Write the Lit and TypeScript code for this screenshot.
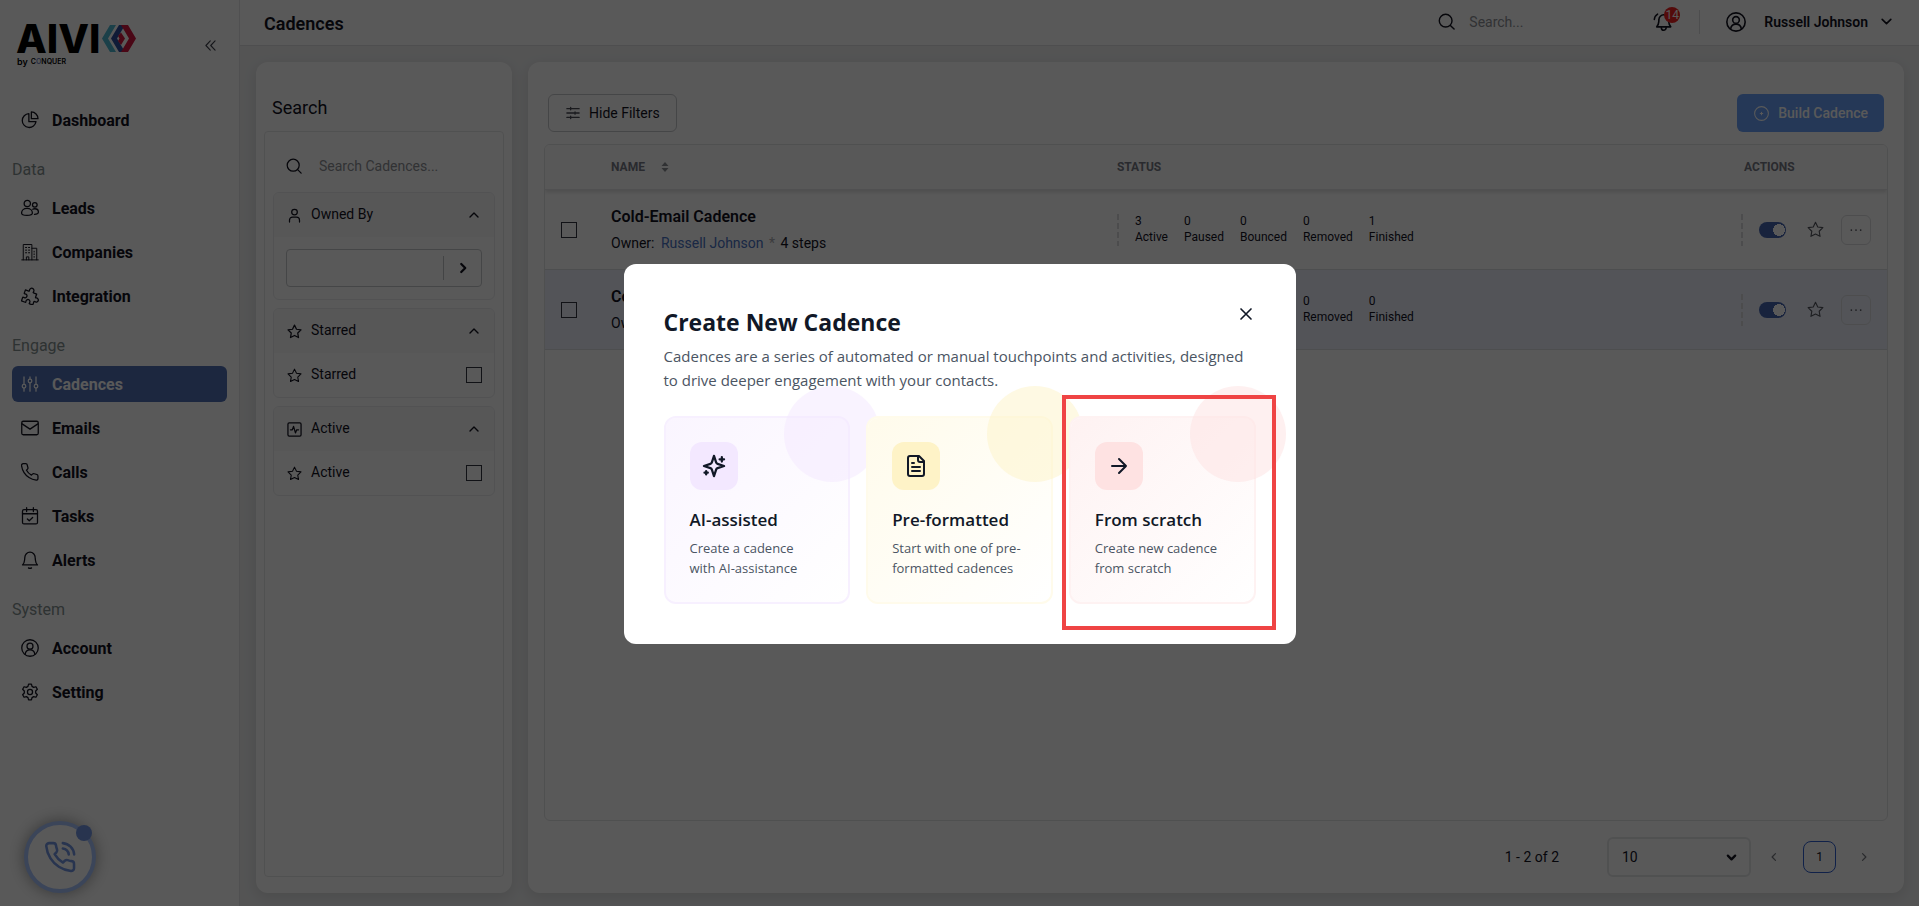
import { LitElement, html, svg, css, TemplateResult } from "lit";
import { customElement } from "lit/decorators.js";

type Glyph = TemplateResult;

const icon = (glyph: Glyph, size = 18, width = 1.6) => html`<svg
  width=${size}
  height=${size}
  viewBox="0 0 24 24"
  fill="none"
  stroke="currentColor"
  stroke-width=${width}
  stroke-linecap="round"
  stroke-linejoin="round"
  aria-hidden="true"
>${glyph}</svg>`;

const g: Record<string, Glyph> = {
  pie: svg`<path d="M10.5 3.6A9.2 9.2 0 1 0 20 14.2h-9.5z"/><path d="M13.8 1.3v8.9h8.9a8.9 8.9 0 0 0-8.9-8.9z"/>`,
  leads: svg`<circle cx="8.400" cy="6" r="4.200"/><path d="M.8 18.600c0-3.400 3-6 7.200-6s7.200 2.600 7.200 6c0 2-1.700 3.200-7.200 3.200s-7.200-1.200-7.200-3.200z"/><circle cx="18.400" cy="7.800" r="3.100"/><path d="M15.600 13.600c.8-.4 1.800-.6 2.800-.6 2.700 0 4.800 1.900 4.800 4.400 0 1.900-1.600 3-5.200 3.100"/>`,
  building: svg`<path d="M1 22.500h22M3 22.500V2h11.500v20.500M14.500 7H21v15.500M7.200 22.500v-4h3.200v4"/><path d="M6 6h1.500M10 6h1.500M6 9.500h1.500M10 9.500h1.500M6 13h1.500M10 13h1.500M17.500 11v1M17.500 14.500v1M17.500 18v1"/>`,
  puzzle: svg`<g transform="rotate(20 12 12)"><path d="M3.500 6.500h4.700c.6 0 .9-.5.600-1.100a3 3 0 1 1 5.600 0c-.3.600 0 1.100.6 1.100h4.500v4.500c0 .6.500.9 1.100.6a2.800 2.800 0 1 1 0 5.200c-.6-.3-1.100 0-1.100.6v4.600H15c-.6 0-.9-.5-.6-1.100a2.700 2.700 0 1 0-5 0c.3.600 0 1.100-.6 1.100H3.500v-4.800c0-.6.500-.9 1.100-.6a2.700 2.700 0 1 0 0-5c-.6.300-1.100 0-1.100-.6z"/></g>`,
  sliders: svg`<path d="M4 2.500v10M4 17.500v4M12 2.500v3M12 10.500v11M20 2.500v10M20 17.500v4"/><circle cx="4" cy="15" r="2.400"/><circle cx="12" cy="8" r="2.400"/><circle cx="20" cy="15" r="2.400"/>`,
  mail: svg`<rect x="1" y="3" width="22" height="18" rx="2"/><path d="m1.500 6.500 10.500 7 10.500-7"/>`,
  phone: svg`<path d="M22.600 17.300v3.300a2.200 2.200 0 0 1-2.400 2.200 21.800 21.800 0 0 1-9.500-3.400 21.500 21.500 0 0 1-6.600-6.600A21.800 21.800 0 0 1 .7 3.300 2.200 2.200 0 0 1 2.900.9h3.300a2.200 2.200 0 0 1 2.200 1.900c.1 1 .4 2.100.8 3.100a2.200 2.200 0 0 1-.5 2.300L7.300 9.600a17.600 17.600 0 0 0 6.600 6.600l1.400-1.400a2.200 2.200 0 0 1 2.300-.5c1 .4 2 .6 3.100.8a2.200 2.200 0 0 1 1.900 2.200z"/>`,
  tasks: svg`<rect x="2" y="3.500" width="20" height="19" rx="2"/><path d="M2 9h20M7.500 1v5M16.500 1v5M8.500 16l2.500 2.300 4.500-4.300"/>`,
  bell: svg`<path d="M2 18.500h20c-1.800-1.700-2.600-3.700-2.800-6.500l-.3-3.500a6.900 6.900 0 0 0-13.800 0L4.800 12c-.2 2.800-1 4.800-2.800 6.500z"/><path d="M10 22.500c1 .7 3 .7 4 0"/>`,
  ringing: svg`<path d="M4.500 17.800h16.800c-1.500-1.700-2.200-3.400-2.400-6l-.2-2.600a5.800 5.800 0 0 0-11.600 0L6.900 11.800c-.2 2.600-.9 4.300-2.400 6z"/><path d="M10 18.500c0 4.600 5.800 4.600 5.800 0M5.500 2.600C3 4.200 1.800 6 1.600 9"/>`,
  user: svg`<circle cx="12" cy="12" r="11"/><circle cx="12" cy="9.500" r="4"/><path d="M5.500 20.500c.5-4 3-6 6.500-6s6 2 6.500 6"/>`,
  gear: svg`<circle cx="12" cy="12" r="3.400"/><path d="m9.300 4.500.8-3h3.800l.8 3 2.200 1.300 3-.8 1.900 3.300-2.200 2.300v2.800l2.200 2.300-1.900 3.300-3-.8-2.200 1.300-.8 3h-3.800l-.8-3-2.200-1.300-3 .8-1.900-3.300 2.200-2.300v-2.800L2.200 8.300 4.100 5l3 .8z"/>`,
  search: svg`<circle cx="10.800" cy="10.800" r="9"/><path d="m17.500 17.500 5.200 5.200"/>`,
  person: svg`<circle cx="12" cy="6.500" r="4.500"/><path d="M4 22.500v-3.200a4.800 4.800 0 0 1 4.800-4.800h6.400a4.800 4.800 0 0 1 4.800 4.800v3.200"/>`,
  star: svg`<path d="m12 1.800 3.200 6.600 7.200 1-5.200 5.100 1.200 7.200-6.400-3.400-6.400 3.400 1.200-7.200L1.600 9.400l7.200-1z"/>`,
  activity: svg`<rect x="1.500" y="1.500" width="21" height="21" rx="2"/><path d="M5.500 12.500h3l2-5.500 3 10.500 2-5h3"/>`,
  up: svg`<path d="m4 16 8-8 8 8"/>`,
  down: svg`<path d="m4 8 8 8 8-8"/>`,
  left: svg`<path d="m15.500 4-8 8 8 8"/>`,
  right: svg`<path d="m8.500 4 8 8-8 8"/>`,
  dleft: svg`<path d="M11.500 2 2 12l9.500 10M22 2l-9.500 10L22 22"/>`,
  filter: svg`<path d="M1.500 4.500h21M1.500 12h21M1.500 19.500h21"/><path d="M8 2.500v4M15.500 10v4M8 17.500v4"/>`,
  target: svg`<circle cx="12" cy="12" r="11"/><path d="M12 10v4M10 12h4"/>`,
  dots: svg`<path d="M4 12h.01M12 12h.01M20 12h.01"/>`,
  call: svg`<path d="M21.900 17v2.900a2 2 0 0 1-2.200 2 19.400 19.400 0 0 1-8.500-3 19.100 19.100 0 0 1-5.900-5.900 19.400 19.400 0 0 1-3-8.600A2 2 0 0 1 4.200 2.200h3A2 2 0 0 1 9.200 3.900c.1 1 .4 1.900.7 2.800a2 2 0 0 1-.5 2.100L8.200 10a15.700 15.700 0 0 0 5.900 5.900l1.200-1.200a2 2 0 0 1 2.100-.5c.9.300 1.800.6 2.800.7a2 2 0 0 1 1.700 2.100z"/><path d="M14 2.200a8.800 8.800 0 0 1 8 8M14 6a5 5 0 0 1 4.200 4.200"/>`,
  close: svg`<path d="M18 6 6 18M6 6l12 12"/>`,
  sparkles: svg`<path d="m12 3-1.900 5.800a2 2 0 0 1-1.300 1.300L3 12l5.800 1.900a2 2 0 0 1 1.300 1.300L12 21l1.900-5.800a2 2 0 0 1 1.300-1.300L21 12l-5.800-1.900a2 2 0 0 1-1.300-1.300zM5 16.500v3M19 4v4M3.500 18h3M17 6h4" transform="translate(12 12) scale(1.120) translate(-12 -12)"/>`,
  file: svg`<path d="M15 2H6a2 2 0 0 0-2 2v16a2 2 0 0 0 2 2h12a2 2 0 0 0 2-2V7z"/><path d="M14 2v4a2 2 0 0 0 2 2h4M10 9H8M16 13H8M16 17H8"/>`,
  arrow: svg`<path d="M5 12h14M12 5l7 7-7 7"/>`,
};

const nav = [
  { items: [["pie", "Dashboard"]] },
  { label: "Data", items: [["leads", "Leads"], ["building", "Companies"], ["puzzle", "Integration"]] },
  { label: "Engage", items: [["sliders", "Cadences"], ["mail", "Emails"], ["phone", "Calls"], ["tasks", "Tasks"], ["bell", "Alerts"]] },
  { label: "System", items: [["user", "Account"], ["gear", "Setting"]] },
];

const rows = [
  { name: "Cold-Email Cadence", owner: "Russell Johnson", steps: "4 steps", stats: [3, 0, 0, 0, 1] },
  { name: "Cold-Call Cadence", owner: "Russell Johnson", steps: "4 steps", stats: [0, 0, 0, 0, 0] },
];
const statNames = ["Active", "Paused", "Bounced", "Removed", "Finished"];

const options = [
  { tone: "violet", glyph: "sparkles", title: "AI-assisted", text: "Create a cadence\nwith AI-assistance" },
  { tone: "amber", glyph: "file", title: "Pre-formatted", text: "Start with one of pre-formatted cadences" },
  { tone: "rose", glyph: "arrow", title: "From scratch", text: "Create new cadence\nfrom scratch", marked: true },
];

const base = css`
  * { box-sizing: border-box; }
  :host { display: block; }
  button, input, select { font: inherit; color: inherit; margin: 0; }
  button { cursor: pointer; background: none; border: 0; padding: 0; }
  a { color: inherit; text-decoration: none; }
  svg { display: block; flex: none; }
`;

@customElement("side-nav")
class SideNav extends LitElement {
  static styles = [base, css`
    :host { width: 240px; flex: none; background: #fff; border-right: 1px solid #e4e5e7; padding: 0 12px; }
    .top { display: flex; justify-content: space-between; height: 98px; padding: 19px 11px 0 4px; }
    .word { display: flex; align-items: center; gap: 2px; font: 800 40px/39px Inter, sans-serif; color: #000; }
    .by { display: flex; align-items: center; gap: 3px; padding-left: 1px; font: 600 9px/8px Inter, sans-serif; color: #000; }
    .by small { font-size: 7px; font-weight: 600; }
    .by b { font-weight: 600; color: #6f7fc0; }
    .collapse { align-self: flex-start; padding-top: 21px; color: #3d3f4a; }
    h2 { margin: 0; height: 44px; padding-top: 12px; font: 400 16px/24px Roboto, sans-serif; color: #83908f; }
    .item { display: flex; align-items: center; gap: 13px; height: 36px; margin-bottom: 8px; padding: 0 9px; border-radius: 6px; font-weight: 700; font-size: 16px; color: #12121f; }
    .item.on { background: #506fb4; color: #fff; }
    nav { padding-top: 4px; }
  `];
  render() {
    return html`
      <div class="top">
        <div>
          <div class="word"><span>AIVI</span>
            <svg width="34" height="29" viewBox="0 0 34 29" aria-hidden="true">
              <path d="M8 1h6L6 14.500 14 28H8L0 14.500z" fill="#4fb7d0" />
              <path d="M17 1h6l-8 13.500L23 28h-6L9 14.500z" fill="#2f4f9e" />
              <path d="M19 8.500 23 14.500 19 21l-3-4 1.500-2.500L16 12z" fill="#d3163f" />
              <path d="M19 1h7l8 13.500L26 28h-7l8-13.500z" fill="#d3163f" />
            </svg>
          </div>
          <div class="by">by <small>C<b>O</b>NQUER</small></div>
        </div>
        <button class="collapse" aria-label="Collapse menu">${icon(g.dleft, 11, 2.4)}</button>
      </div>
      <nav>
        ${nav.map((s) => html`
          ${s.label ? html`<h2>${s.label}</h2>` : ""}
          ${s.items.map(([i, t]) => html`<a href="#" class="item ${t === "Cadences" ? "on" : ""}">${icon(g[i], 18, i === "building" ? 1.3 : 1.7)}${t}</a>`)}
        `)}
      </nav>`;
  }
}

@customElement("top-bar")
class TopBar extends LitElement {
  static styles = [base, css`
    :host { display: flex; align-items: center; height: 46px; flex: none; background: #fff; border-bottom: 1px solid #dfe0e2; padding: 0 26px 2px 24px; }
    h1 { margin: 0; flex: 1; font-size: 18px; line-height: 24px; font-weight: 600; color: #12121f; padding-top: 4px; }
    label { display: flex; align-items: center; gap: 14px; width: 215px; }
    input { border: 0; outline: 0; padding: 0; background: none; width: 140px; font-size: 14px; }
    input::placeholder { color: #8d9096; opacity: 1; }
    .bell { position: relative; }
    .badge { position: absolute; top: -5px; right: -7px; width: 16px; height: 16px; border-radius: 8px; background: #f02222; color: #fff; font-size: 12px; line-height: 16px; text-align: center; }
    .line { width: 1px; height: 24px; background: #dcdde0; margin: 0 26px; }
    .who { display: flex; align-items: center; font-size: 14px; font-weight: 600; color: #12121f; gap: 18px; }
    .who svg:last-child { margin-left: -6px; }
  `];
  render() {
    return html`
      <h1>Cadences</h1>
      <label aria-label="Search">${icon(g.search, 17, 2)}<input type="search" placeholder="Search..." /></label>
      <button class="bell" aria-label="Notifications">${icon(g.ringing, 20, 1.9)}<span class="badge">14</span></button>
      <span class="line"></span>
      <button class="who">${icon(g.user, 20, 1.9)}<span>Russell Johnson</span>${icon(g.down, 13, 3)}</button>`;
  }
}

@customElement("filter-panel")
class FilterPanel extends LitElement {
  static styles = [base, css`
    :host { display: flex; flex-direction: column; width: 256px; flex: none; background: #fff; border-radius: 12px; padding: 32px 8px 16px; box-shadow: 0 4px 14px rgba(0, 0, 0, 0.1); color: #12121f; font-size: 14px; }
    h2 { margin: 0 8px 9px; font-size: 18px; line-height: 28px; font-weight: 400; }
    .box { flex: 1; border: 1px solid #e6e7e9; border-radius: 4px; padding: 8px; display: flex; flex-direction: column; gap: 8px; }
    .find { display: flex; align-items: center; gap: 17px; height: 52px; padding-left: 13px; margin-bottom: -8px; }
    .find input { border: 0; outline: 0; padding: 0; background: none; width: 150px; }
    .find input::placeholder { color: #8d9096; opacity: 1; }
    section { border: 1px solid #ebecee; border-radius: 6px; overflow: hidden; }
    .head, .row { display: flex; align-items: center; gap: 9px; height: 44px; padding: 0 12px 0 13px; width: 100%; }
    .head { background: #f9f9fa; }
    .head span, .row span { flex: 1; text-align: left; padding-bottom: 2px; }
    .head svg:last-child { margin-right: 2px; }
    .pick { display: flex; align-items: center; margin: 12px; height: 38px; border: 1px solid #c6c8cc; border-radius: 4px; }
    .pick input { flex: 1; min-width: 0; border: 0; outline: 0; background: none; }
    .pick button { width: 38px; height: 24px; border-left: 1px solid #c0c2c6; display: grid; place-items: center; }
    .row input { appearance: none; width: 16px; height: 16px; border: 1px solid #33343f; background: #fff; }
  `];
  render() {
    const group = (i: string, t: string) => html`
      <section>
        <button class="head">${icon(g[i], 15, 2)}<span>${t}</span>${icon(g.up, 12, 2.8)}</button>
        <label class="row">${icon(g.star, 15, 1.7)}<span>${t}</span><input type="checkbox" /></label>
      </section>`;
    return html`
      <h2>Search</h2>
      <div class="box">
        <label class="find" aria-label="Search cadences">${icon(g.search, 16, 1.9)}<input placeholder="Search Cadences..." /></label>
        <section>
          <button class="head">${icon(g.person, 15, 2)}<span>Owned By</span>${icon(g.up, 12, 2.8)}</button>
          <div class="pick"><input aria-label="Owner" /><button aria-label="Choose owner">${icon(g.right, 12, 4.5)}</button></div>
        </section>
        ${group("star", "Starred")} ${group("activity", "Active")}
      </div>`;
  }
}

@customElement("cadence-table")
class CadenceTable extends LitElement {
  static styles = [base, css`
    :host { display: flex; flex-direction: column; flex: 1; min-width: 0; background: #fff; border-radius: 12px; padding: 32px 16px 16px; box-shadow: 0 4px 14px rgba(0, 0, 0, 0.1); color: #12121f; font-size: 14px; }
    .bar { display: flex; justify-content: space-between; padding: 0 4px; margin-bottom: 12px; }
    .bar button { display: flex; align-items: center; gap: 9px; height: 38px; padding: 0 16px 0 17px; border-radius: 6px; }
    .hide { border: 1px solid #c6c8cc; }
    .hide svg { color: #4a4b55; }
    .build { background: #6aa0f9; color: #fff; font-weight: 500; }
    .frame { flex: 1; border: 1px solid #e3e4e6; border-radius: 6px; overflow: hidden; }
    table { width: 100%; border-spacing: 0; table-layout: fixed; }
    .c1 { width: 50px; }
    .c2 { width: 37.7%; }
    .c4 { width: 162px; }
    th, td { padding: 0 16px; text-align: left; }
    th { height: 45px; background: #fdfdfd; font-size: 12px; font-weight: 700; color: #777a85; border-bottom: 1px solid #e6e6e8; }
    thead { position: relative; box-shadow: 0 2px 4px rgba(0, 0, 0, 0.14); }
    .sort { display: inline-flex; align-items: center; gap: 16px; }
    th:last-child { padding-left: 19px; }
    td { height: 80px; border-bottom: 1px solid #dcdee3; }
    .tint td { background: #edf1fd; }
    .tick { display: block; appearance: none; width: 16px; height: 16px; border: 1px solid #33343f; }
    .label { padding-bottom: 2px; }
    .name { font-size: 16px; line-height: 24px; font-weight: 600; }
    .own { line-height: 20px; margin-top: 4px; }
    .own a { color: #4a72c4; margin: 0 2px 0 3px; }
    .own i { color: #a9abb0; font-style: normal; margin-right: 2px; }
    .stats, .acts { display: flex; align-items: center; }
    .stats { gap: 16px; font-size: 12px; line-height: 16px; }
    .stats div { padding-bottom: 2px; }
    .dash { width: 2px; height: 32px; background: repeating-linear-gradient(#dadbdd 0 6px, transparent 6px 9px); }
    .acts { height: 32px; }
    .sw { appearance: none; width: 28px; height: 16px; border-radius: 8px; background: radial-gradient(circle at 20px 8px, #fff 6px, #4565b0 6px); margin: 0 21px 0 16px; }
    .acts button { color: #55575f; }
    .more { display: grid; place-items: center; width: 30px; height: 30px; border: 1px solid #dcdde0; border-radius: 6px; margin-left: 17px; }
    .pages { display: flex; align-items: center; justify-content: flex-end; margin-top: 16px; padding-right: 17px; }
    .size { position: relative; margin: 0 16px 0 48px; }
    select { appearance: none; width: 144px; height: 40px; border: 2px solid #e6e7e9; border-radius: 6px; background: #fff; padding: 0 13px; display: block; }
    .size svg { position: absolute; right: 14px; top: 15px; pointer-events: none; }
    .step { width: 14px; height: 32px; display: grid; place-items: center; color: #777a80; }
    .now { width: 33px; height: 32px; border: 1px solid #2f5fd0; border-radius: 8px; font-size: 12px; margin: 0 21px 0 22px; }
  `];
  render() {
    return html`
      <div class="bar">
        <button class="hide">${icon(g.filter, 14, 2.2)}Hide Filters</button>
        <button class="build">${icon(g.target, 15, 1.7)}Build Cadence</button>
      </div>
      <div class="frame">
        <table>
          <colgroup><col class="c1" /><col class="c2" /><col /><col class="c4" /></colgroup>
          <thead>
            <tr>
              <th></th>
              <th><span class="sort">NAME
                <svg width="8" height="10" viewBox="0 0 8 10" fill="#8b8d93" aria-hidden="true"><path d="M4 0l3.500 4h-7zM4 10l3.500-4h-7z" /></svg>
              </span></th>
              <th>STATUS</th>
              <th>ACTIONS</th>
            </tr>
          </thead>
          <tbody>
            ${rows.map((r, n) => html`
              <tr class=${n ? "tint" : ""}>
                <td><input class="tick" type="checkbox" aria-label="Select ${r.name}" /></td>
                <td class="label">
                  <div class="name">${r.name}</div>
                  <div class="own">Owner: <a href="#">${r.owner}</a> <i>*</i> ${r.steps}</div>
                </td>
                <td><div class="stats"><span class="dash"></span>${r.stats.map((v, k) => html`<div>${v}<br />${statNames[k]}</div>`)}</div></td>
                <td><div class="acts"><span class="dash"></span>
                  <input class="sw" type="checkbox" role="switch" aria-label="Active" checked />
                  <button aria-label="Star">${icon(g.star, 17, 1.6)}</button>
                  <button class="more" aria-label="More">${icon(g.dots, 14, 3)}</button></div></td>
              </tr>`)}
          </tbody>
        </table>
      </div>
      <div class="pages">
        <span>1 - 2 of 2</span>
        <span class="size"><select aria-label="Rows per page"><option>10</option></select>${icon(g.down, 11, 5)}</span>
        <button class="step" aria-label="Previous page">${icon(g.left, 10, 3)}</button>
        <button class="now">1</button>
        <button class="step" aria-label="Next page">${icon(g.right, 10, 3)}</button>
      </div>`;
  }
}

@customElement("create-dialog")
class CreateDialog extends LitElement {
  static styles = [base, css`
    :host { position: fixed; inset: 0; padding-top: 2px; display: grid; place-items: center; background: rgba(0, 0, 0, 0.65); font-family: "Open Sans", "Noto Sans", sans-serif; color: #111827; }
    .dialog { position: relative; width: 672px; background: #fff; border-radius: 12px; padding: 40px; }
    h2 { margin: 0; padding-top: 2px; font-size: 23px; line-height: 32px; font-weight: 700; }
    .x { position: absolute; top: 40px; right: 40px; }
    p { margin: 6px 0 24px; font-size: 15px; line-height: 24px; color: #4b5563; }
    .cards { display: grid; grid-template-columns: repeat(3, 1fr); gap: 16px; }
    .card { position: relative; border: 2px solid var(--edge); border-radius: 12px; padding: 24px; text-align: left; background: linear-gradient(135deg, var(--soft), #fff) padding-box, #fff; }
    .card::before { content: ""; position: absolute; top: -32px; right: -32px; width: 96px; height: 96px; border-radius: 50%; background: var(--chip); opacity: 0.5; }
    .chip { display: grid; place-items: center; width: 48px; height: 48px; border-radius: 12px; background: var(--chip); }
    h3 { margin: 16px 0 4px; font-size: 17px; line-height: 28px; font-weight: 600; }
    .text { font-size: 13px; line-height: 20px; color: #4b5563; white-space: pre-line; }
    .violet { --soft: #faf5ff; --edge: #f7f0ff; --chip: #f3e8ff; }
    .amber { --soft: #fffbeb; --edge: #fffbeb; --chip: #fef3c7; }
    .rose { --soft: #fef2f2; --edge: #fef2f2; --chip: #fee2e2; }
    .mark { position: absolute; inset: -23px -22px -28px -9px; border: 4px solid #ef4444; }
  `];
  render() {
    return html`
      <div class="dialog" role="dialog" aria-modal="true" aria-labelledby="t">
        <h2 id="t">Create New Cadence</h2>
        <button class="x" aria-label="Close">${icon(g.close, 20, 2)}</button>
        <p>Cadences are a series of automated or manual touchpoints and activities, designed to drive deeper engagement with your contacts.</p>
        <div class="cards">
          ${options.map((o) => html`
            <button class="card ${o.tone}">
              <div class="chip">${icon(g[o.glyph], 24, 2)}</div>
              <h3>${o.title}</h3>
              <div class="text">${o.text}</div>
              ${o.marked ? html`<span class="mark"></span>` : ""}
            </button>`)}
        </div>
      </div>`;
  }
}

@customElement("app-root")
class AppRoot extends LitElement {
  static styles = [base, css`
    :host { display: flex; height: 100vh; font-family: Roboto, sans-serif; background: #eff0f1; color: #12121f; }
    .page { flex: 1; min-width: 0; display: flex; flex-direction: column; }
    main { flex: 1; min-height: 0; display: flex; gap: 16px; padding: 16px 15px 13px 16px; }
    .fab { position: fixed; left: 24px; bottom: 13px; width: 72px; height: 72px; border-radius: 50%; border: 4px solid #a9c5ff; background: #fff; color: #7295e2; display: grid; place-items: center; box-shadow: 0 0 16px rgba(0, 0, 0, 0.4); }
    .dot { position: absolute; top: 0; right: 0; width: 16px; height: 16px; border-radius: 50%; background: #7295e2; }
  `];
  render() {
    return html`
      <side-nav></side-nav>
      <div class="page">
        <top-bar></top-bar>
        <main><filter-panel></filter-panel><cadence-table></cadence-table></main>
      </div>
      <button class="fab" aria-label="Open dialer">${icon(g.call, 34, 1.8)}<span class="dot"></span></button>
      <create-dialog></create-dialog>`;
  }
}
